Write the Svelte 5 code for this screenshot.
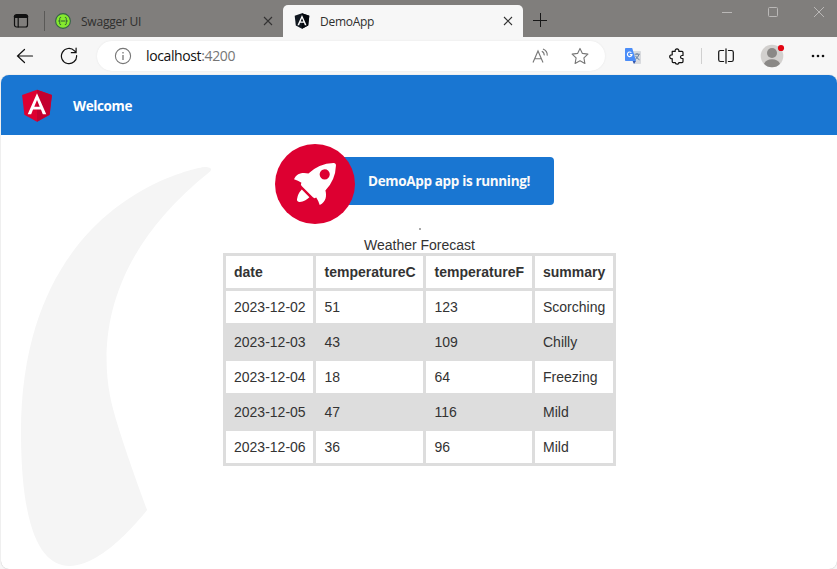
<script>
  const columns = ['date', 'temperatureC', 'temperatureF', 'summary'];
  const forecasts = [
    ['2023-12-02', 51, 123, 'Scorching'],
    ['2023-12-03', 43, 109, 'Chilly'],
    ['2023-12-04', 18, 64, 'Freezing'],
    ['2023-12-05', 47, 116, 'Mild'],
    ['2023-12-06', 36, 96, 'Mild']
  ];
</script>

{#snippet cross()}
  <svg class="cross" width="10" height="10" viewBox="0 0 10 10"><path d="M1 1l8 8M9 1L1 9" /></svg>
{/snippet}

<div class="browser">
  <header class="tabs">
    <svg class="workspace line" width="16" height="16" viewBox="0 0 16 16">
      <rect x="1.5" y="1.5" width="13" height="12.5" rx="2" />
      <path d="M2.3 3.4h11.4" stroke-width="3" /><path d="M5.2 4v10" />
    </svg>
    <i class="tab-divider"></i>
    <div class="tab swagger">
      <svg width="16" height="16" viewBox="0 0 16 16">
        <circle cx="8" cy="8" r="7.4" fill="#85ea2d" stroke="#35604a" stroke-width="1.1" />
        <path d="M6.1 4.4H5.7Q4.7 4.4 4.7 5.5v1.2Q4.7 8 3.6 8q1.1 0 1.1 1.3v1.2q0 1.1 1 1.1h.4M9.9 4.4h.4q1 0 1 1.1v1.2q0 1.3 1.1 1.3-1.1 0-1.1 1.3v1.2q0 1.1-1 1.1h-.4M5.5 8h5" fill="none" stroke="#264d35" stroke-width=".9" />
      </svg>
      <span>Swagger UI</span>
      {@render cross()}
    </div>
    <div class="tab active">
      <svg width="16" height="16" viewBox="31 28 188 204">
        <path fill="#111820" d="M125 30L31.9 63.2l14.2 123.1L125 230l78.9-43.7 14.2-123.1z" />
        <path fill="#05090e" d="M125 30v200l78.9-43.7 14.2-123.1z" />
        <path fill="#fff" d="M125 52.1L66.8 182.6h21.7l11.7-29.2h49.4l11.7 29.2H183L125 52.1zm17 83.3h-34l17-40.9 17 40.9z" />
      </svg>
      <span>DemoApp</span>
      {@render cross()}
    </div>
    <svg class="plus" width="14" height="14" viewBox="0 0 14 14"><path d="M7.5 0v14M0 7.5h14" /></svg>
    <div class="window-controls">
      <svg width="12" height="12" viewBox="0 0 12 12"><path d="M1 6.5h10" /></svg>
      <svg width="12" height="12" viewBox="0 0 12 12"><rect x="1.5" y="1.5" width="9" height="9" rx="1" /></svg>
      <svg width="12" height="12" viewBox="0 0 12 12"><path d="M1 1l10 10M11 1L1 11" /></svg>
    </div>
  </header>

  <nav>
    <svg class="back line" width="18" height="16" viewBox="0 0 18 16"><path d="M8.5 1.5L1.5 8l7 6.5M1.5 8H16.5" /></svg>
    <svg class="reload line" width="18" height="18" viewBox="0 0 18 18"><path d="M16.6 8.5A7.6 7.6 0 1 1 14.5 3.8L16 5.3M16.1 1v4.7h-4.8" /></svg>
    <div class="address">
      <svg class="grey" width="18" height="18" viewBox="0 0 18 18"><circle cx="9" cy="9" r="7.6" /><path d="M9 8v5M9 5v1.5" stroke-width="1.3" /></svg>
      <span class="url">localhost<em>:4200</em></span>
      <svg class="grey read" width="17" height="17" viewBox="0 0 17 17"><path d="M1 14.5L6 3l5 11.5M2.8 10.8h6.4M9.8 3.2q2.6 1.2 2.4 4.2M11 1q4.6 2 4.2 6.6" /></svg>
      <svg class="grey star" width="18" height="18" viewBox="0 0 18 18"><path stroke-linejoin="round" d="M9 1.4l2.4 5 5.5.7-4 3.8 1 5.6L9 13.8l-4.9 2.7 1-5.6-4-3.8 5.5-.7z" /></svg>
    </div>
    <svg class="translate" width="16" height="16" viewBox="0 0 16 16">
      <path fill="#d8dade" d="M6 3h9.2q.8 0 .8.8v11.4q0 .8-.8.8H9z" />
      <path d="M9.5 6.2h5.2M12 5v1.3M14 6.4q-.8 3-4 5.2M10.5 7.8q1.5 2.8 4 4" fill="none" stroke="#6780a0" />
      <path fill="#4b8df8" d="M.8 0h6.4L11 13H.8Q0 13 0 12.2V.8Q0 0 .8 0z" />
      <path fill="#3155ae" d="M7.6 13H11l-2 3z" />
      <path d="M6.4 4.7A2.3 2.3 0 1 0 7 6.6H4.8" fill="none" stroke="#fff" stroke-width="1.1" />
    </svg>
    <svg class="puzzle line" width="16" height="17" viewBox="0 0 16 17"><path stroke-linejoin="round" d="M3.2 3.4h3C5.8 1.8 6.8.9 8 .9s2.2.9 1.8 2.5H13q1 0 1 1v3.1h-1.2q-1.3.2-1.3 1.5t1.3 1.5H14v3.1q0 1-1 1H9.8c.1 1-.7 1.6-1.7 1.6s-1.8-.7-1.8-1.6H4.2q-1 0-1-1v-2.9C1.7 10.9.7 10 .7 8.8S1.7 6.7 3.2 7z" /></svg>
    <i class="nav-divider"></i>
    <svg class="split line" width="16" height="16" viewBox="0 0 16 16"><path d="M5.6 2.5H2.5Q.7 2.5.7 4.3v7.4q0 1.8 1.8 1.8h3.1M10.4 2.5h3.1q1.8 0 1.8 1.8v7.4q0 1.8-1.8 1.8h-3.1M8 .8v14.4" /></svg>
    <svg class="avatar" width="26" height="26" viewBox="0 0 26 26">
      <circle cx="12" cy="14" r="11.3" fill="#d2d0ce" /><circle cx="12" cy="11" r="5" fill="#8a8886" /><path fill="#8a8886" d="M4 21.8Q6 17.3 12 17.3t8 4.5Q17 25.3 12 25.3t-8-3.5z" /><circle cx="21" cy="6" r="3.1" fill="#e30613" />
    </svg>
    <svg class="more" width="14" height="4" viewBox="0 0 14 4"><circle cx="2" cy="2" r="1.3" /><circle cx="7" cy="2" r="1.3" /><circle cx="12" cy="2" r="1.3" /></svg>
  </nav>

  <div class="page">
    <div class="toolbar">
      <svg width="40" height="40" viewBox="0 0 250 250">
        <path fill="#dd0031" d="M125 30L31.9 63.2l14.2 123.1L125 230l78.9-43.7 14.2-123.1z" />
        <path fill="#c3002f" d="M125 30v200l78.9-43.7 14.2-123.1z" />
        <path fill="#fff" d="M125 52.1L66.8 182.6h21.7l11.7-29.2h49.4l11.7 29.2H183L125 52.1zm17 83.3h-34l17-40.9 17 40.9z" />
      </svg>
      <span>Welcome</span>
    </div>
    <svg class="smoke" width="190" height="399" viewBox="0 0 516.119 1083.632">
      <path fill="#f5f5f5" transform="translate(-147.02 -140.939)" d="M644.6,141S143.02,215.537,147.049,870.207s342.774,201.755,342.774,201.755S404.659,847.213,388.815,762.2c-27.116-145.51-11.551-384.124,271.9-609.1C671.15,139.365,644.6,141,644.6,141Z" />
    </svg>
    <main>
      <div class="banner">
        <svg width="80" height="80" viewBox="0 0 101.678 101.678">
          <circle cx="50.839" cy="50.839" r="50.839" fill="#dd0031" />
          <g fill="#fff" transform="translate(24.185 24.185)">
            <path transform="translate(.371 3.363)" d="M3.4,42.615a3.084,3.084,0,0,0,3.553,3.553,21.419,21.419,0,0,0,12.215-6.107L9.511,30.4A21.419,21.419,0,0,0,3.4,42.615Z" />
            <path d="M53.3,3.221A3.09,3.09,0,0,0,50.081,0,48.227,48.227,0,0,0,18.322,13.437c-6-1.666-14.991-1.221-18.322,7.218A33.892,33.892,0,0,1,9.439,25.1l-.333.666a3.013,3.013,0,0,0,.555,3.553L23.985,43.641a2.9,2.9,0,0,0,3.553.555l.666-.333A33.892,33.892,0,0,1,32.647,53.3c8.55-3.664,8.884-12.326,7.218-18.322A48.227,48.227,0,0,0,53.3,3.221ZM34.424,9.772a6.439,6.439,0,1,1,9.106,9.106,6.368,6.368,0,0,1-9.106,0A6.467,6.467,0,0,1,34.424,9.772Z" />
          </g>
        </svg>
        <div class="running"><span>DemoApp app is running!</span></div>
      </div>
      <i class="speck"></i>
      <table>
        <caption>Weather Forecast</caption>
        <colgroup><col class="date" /><col class="celsius" /><col class="fahrenheit" /><col class="summary" /></colgroup>
        <thead><tr>{#each columns as column}<th>{column}</th>{/each}</tr></thead>
        <tbody>
          {#each forecasts as row}
            <tr>{#each row as value}<td>{value}</td>{/each}</tr>
          {/each}
        </tbody>
      </table>
    </main>
  </div>
</div>

<style>
  :global(body) { overflow: hidden; }
  * { box-sizing: border-box; }
  svg { display: block; flex: none; }
  i { display: block; flex: none; }
  .browser { width: 837px; height: 569px; background: #f7f7f7; font-family: "Open Sans", "Noto Sans", sans-serif; overflow: hidden; display: flex; flex-direction: column; }
  .tabs { height: 37px; flex: none; background: #807e7c; display: flex; align-items: flex-start; }
  .line { fill: none; stroke: #111; stroke-width: 1.2; stroke-linecap: round; }
  .workspace { margin: 13px 0 0 13px; }
  .tab-divider { width: 1px; height: 20px; margin: 11px 0 0 15px; background: #5a5957; }
  .tab { display: flex; align-items: center; color: #2f2f2e; font-size: 12px; }
  .tab span { margin-left: 10px; flex: 1; white-space: nowrap; }
  .swagger { height: 32px; width: 228px; margin: 5px 0 0 10px; padding-right: 10px; }
  .swagger span { letter-spacing: -.22px; }
  .cross { fill: none; stroke: #333; stroke-width: 1.1; }
  .active { position: relative; margin: 5px 0 0; width: 240px; height: 32px; padding: 0 10px 0 11px; background: #f7f7f7; border-radius: 5px 5px 0 0; }
  .active span { letter-spacing: -.28px; margin-left: 10px; }
  .plus { margin: 13px 0 0 10px; fill: none; stroke: #171717; stroke-width: 1; }
  .window-controls { margin: 6px 12px 0 auto; display: flex; gap: 34px; fill: none; stroke: #bab8b7; }
  nav { height: 38px; flex: none; display: flex; align-items: center; background: #f7f7f7; }
  .back { margin-left: 16px; }
  .reload { margin-left: 26px; }
  .address { height: 30px; width: 508px; margin-left: 19px; padding: 0 16px 0 17px; border-radius: 15px; background: #fff; box-shadow: 0 0 2px #e5e5e5; display: flex; align-items: center; }
  .grey { fill: none; stroke: #777; stroke-width: 1.1; }
  .url { margin: -2px 0 0 14px; font-size: 14px; letter-spacing: -.38px; color: #111; white-space: nowrap; }
  .url em { font-style: normal; color: #767676; }
  .read { margin-left: auto; }
  .star { margin-left: 22px; }
  .translate { margin-left: 20px; }
  .puzzle { margin-left: 28px; }
  .nav-divider { width: 1px; height: 16px; margin-left: 16px; background: #d0d0d0; }
  .split { margin-left: 16px; }
  .avatar { margin: -3px 0 0 26px; }
  .more { margin-left: 25px; fill: #111; }
  .page { position: relative; flex: 1; min-height: 0; margin-left: 1px; background: #fff; border-radius: 8px; overflow: hidden; box-shadow: 0 0 1px #aaa; }
  .toolbar { height: 60px; background: #1976d2; display: flex; align-items: center; padding: 1px 0 0 16px; color: #fff; font-size: 13.5px; font-weight: 700; }
  .toolbar svg { margin-top: -1px; }
  .toolbar span { margin: 1px 0 0 16px; letter-spacing: -.38px; }
  .smoke { position: absolute; left: 20px; top: 92px; }
  main { position: relative; display: flex; flex-direction: column; align-items: center; padding-top: 9px; color: #333; }
  .banner { width: 279px; height: 80px; margin-right: 9px; display: flex; align-items: center; }
  .banner svg { position: relative; z-index: 1; }
  .running { flex: 1; height: 48px; margin: -6px 0 0 -20px; padding-left: 33px; border-radius: 4px; background: #1976d2; color: #fafafa; display: flex; align-items: center; font-size: 13.5px; font-weight: 700; letter-spacing: -.34px; white-space: nowrap; }
  .speck { width: 2px; height: 2px; margin: 4px 0 0 1px; background: #aaa; }
  table { width: 393px; margin: 7px 0 0 1px; table-layout: fixed; border-collapse: separate; border-spacing: 3px; background: #ddd; font-family: "Liberation Sans", Arial, sans-serif; font-size: 14px; line-height: 16px; white-space: nowrap; }
  caption { height: 16px; }
  .date { width: 87px; }
  .celsius { width: 107px; }
  .fahrenheit { width: 106px; }
  .summary { width: 78px; }
  th, td { height: 32px; padding: 0 8px; text-align: left; background: #fff; }
  th:nth-child(2), td:nth-child(2), th:nth-child(3), td:nth-child(3) { padding-left: 8.5px; }
  tbody tr:nth-child(even) td { background: #ddd; }
</style>
